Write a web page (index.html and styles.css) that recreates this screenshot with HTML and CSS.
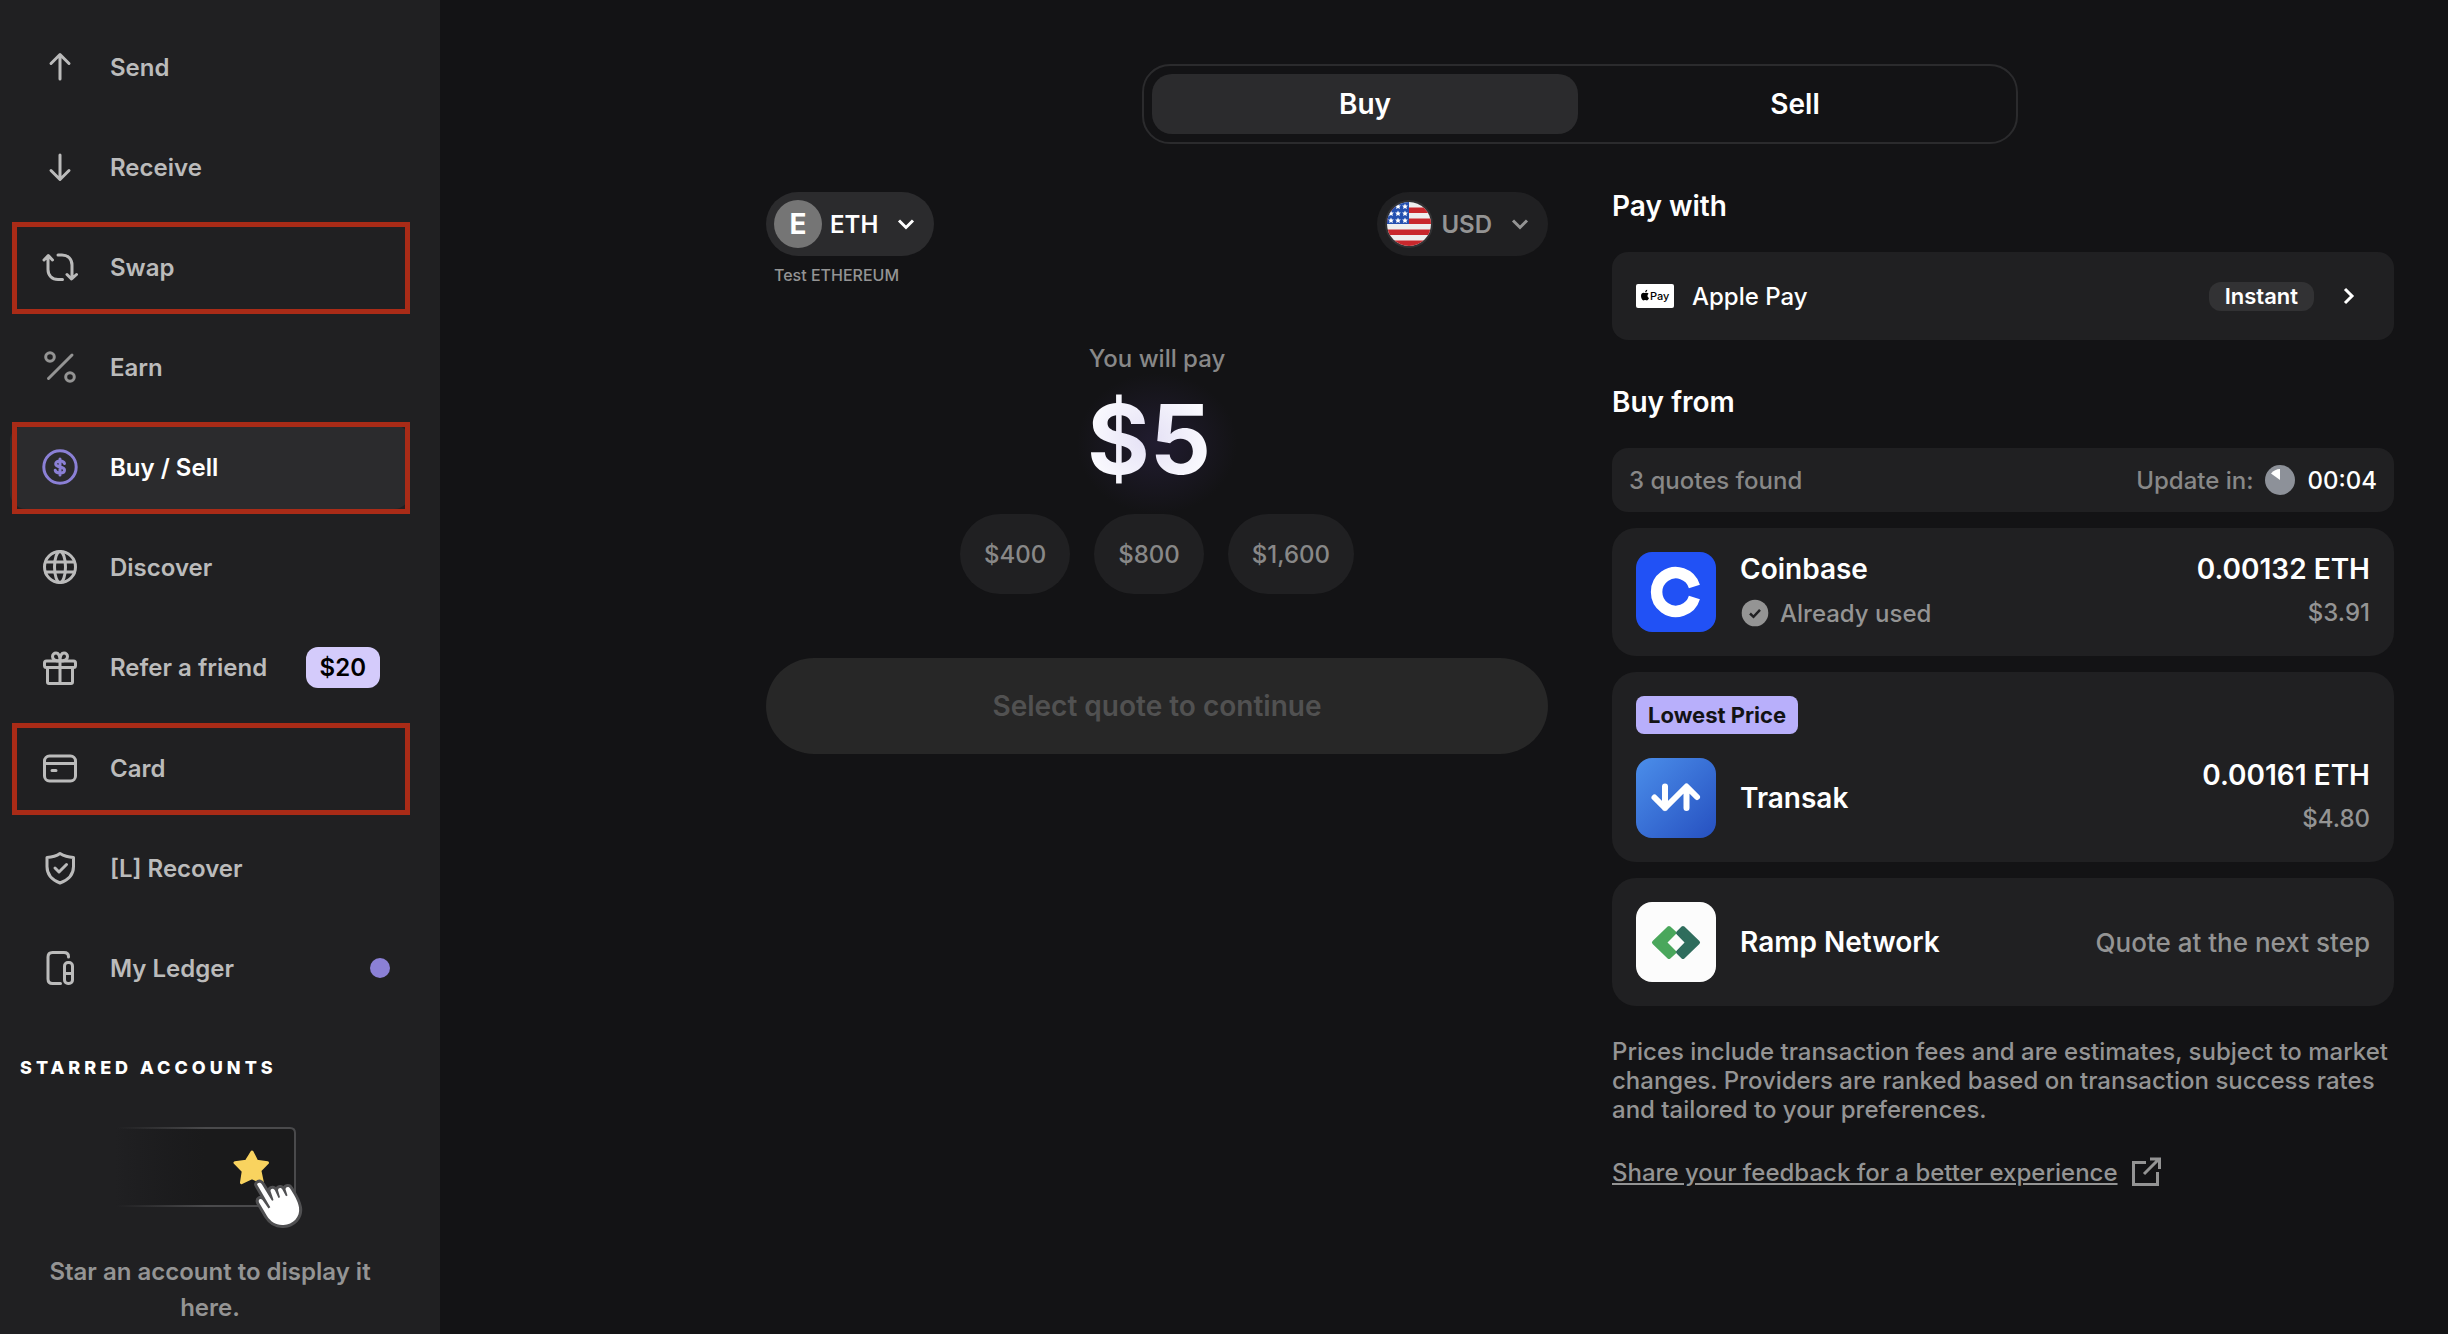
FILE: index.html
```html
<!DOCTYPE html>
<html lang="en">

<head>
  <meta charset="utf-8">
  <title>Buy / Sell</title>
  <link rel="stylesheet" href="styles.css">
</head>

<body>
  <aside class="sidebar">
    <nav class="menu">
      <a href="#" class="menu-item">
        <svg class="icon" viewBox="0 0 40 40"><path d="M20 32V8M11 16.500l9-9 9 9"/></svg>
        <span>Send</span>
      </a>
      <a href="#" class="menu-item">
        <svg class="icon" viewBox="0 0 40 40"><path d="M20 8v24M11 23.500l9 9 9-9"/></svg>
        <span>Receive</span>
      </a>
      <a href="#" class="menu-item marked">
        <svg class="icon" viewBox="0 0 40 40"><path d="M22.500 32.500H18c-6 0-10-4-10-10V9M4 13l4.300-4.500L12.500 13M18 8h4c6 0 10 4 10 10v13.500M27 27.500l4.500 4.500 5-4.500"/></svg>
        <span>Swap</span>
      </a>
      <a href="#" class="menu-item">
        <svg class="icon dim" viewBox="0 0 40 40"><circle cx="10" cy="10" r="4.300"/><circle cx="30" cy="30" r="4.300"/><path d="M32 8L8.500 31.500"/></svg>
        <span>Earn</span>
      </a>
      <a href="#" class="menu-item active marked">
        <svg class="icon" viewBox="0 0 40 40"><circle cx="20" cy="20" r="16.200"/><path d="M24.500 16.500c-.5-1.700-2-2.500-4.500-2.500s-4.300 1-4.300 3c0 4 8.800 2 8.800 6 0 2-1.900 3-4.500 3s-4.500-.9-4.800-2.700M20 12v16"/></svg>
        <span>Buy / Sell</span>
      </a>
      <a href="#" class="menu-item">
        <svg class="icon" viewBox="0 0 40 40"><circle cx="20" cy="20" r="15.500"/><ellipse cx="20" cy="20" rx="5.500" ry="15.500"/><path d="M5.500 15h29M5.500 25h29"/></svg>
        <span>Discover</span>
      </a>
      <a href="#" class="menu-item">
        <svg class="icon" viewBox="0 0 40 40"><rect x="4.500" y="13" width="31" height="6.500" rx="2"/><path d="M7.500 20v14c0 1 .7 1.500 1.500 1.500h22c.8 0 1.500-.5 1.500-1.500V20M20 13v22M20 13c-4.500 0-7.500-1-7.500-4.500 0-2 1.500-3.500 3.500-3.500 3 0 4 3.500 4 8zM20 13c4.500 0 7.500-1 7.500-4.500 0-2-1.500-3.500-3.500-3.500-3 0-4 3.500-4 8z"/></svg>
        <span>Refer a friend</span>
        <span class="reward">$20</span>
      </a>
      <a href="#" class="menu-item marked">
        <svg class="icon" viewBox="0 0 40 40"><rect x="4.500" y="8" width="31" height="25" rx="5"/><path d="M5 15.500h30M12 22.500h4"/></svg>
        <span>Card</span>
      </a>
      <a href="#" class="menu-item">
        <svg class="icon" viewBox="0 0 40 40"><path d="M20 5.500c4 2.500 8.500 3.700 13.500 4v9c0 8.500-5 13.500-13.500 16.500C12 32 7 27 7 18.500v-9c5-.3 9.500-1.500 13-4zM15 20l4 4 7.500-7.500"/></svg>
        <span>[L] Recover</span>
      </a>
      <a href="#" class="menu-item">
        <svg class="icon" viewBox="0 0 40 40"><path d="M20.500 35.500h-8c-3 0-4.500-1.500-4.500-4.500V9c0-3 1.500-4.500 4.500-4.500H24c3 0 4.500 1.500 4.500 4v.5"/><rect x="24.500" y="14.500" width="8" height="21" rx="3.500"/><path d="M25 25.500h7"/></svg>
        <span>My Ledger</span>
        <span class="dot"></span>
      </a>
    </nav>

    <h2 class="starred-title">STARRED ACCOUNTS</h2>
    <div class="starred">
      <svg width="190" height="104" viewBox="0 0 190 104">
        <defs>
          <linearGradient id="edge" x1="0" x2="1"><stop offset="0" stop-color="#4a4a4c" stop-opacity="0"/><stop offset=".5" stop-color="#4a4a4c"/></linearGradient>
          <linearGradient id="panel" x1="0" x2="1"><stop offset="0" stop-color="#18181a" stop-opacity="0"/><stop offset=".5" stop-color="#1a1a1b"/></linearGradient>
        </defs>
        <path d="M0 2h175q5 0 5 5v68q0 5-5 5H0z" fill="url(#panel)"/>
        <path d="M2 2h173q5 0 5 5v68q0 4.900-5 5H2" fill="none" stroke="url(#edge)" stroke-width="2"/>
        <path d="M137 26l4.700 9.200 10.800 1.600-7.600 7.700 2.500 12-10.400-4.800-10.500 4.900 1.800-11.500-8.300-8.300 11.300-1.600z" fill="#f9d35f" stroke="#f9d35f" stroke-width="3" stroke-linejoin="round"/>
        <path d="M142.500 57.500c1.500-1.500 3.500-1 4.500 1l9.500 15.500c.8 1.200 2.300.6 1.800-.8l-2.800-8.200c0-3 3.300-3 4.500-.5l3.500 7.500 1.500-.7-2-7c.3-3 3.500-3 4.500-.5l3.500 6.500 1.500-.7-2-6.300c.3-2.700 3.500-3 4.800-.5 3.700 6 7.700 12 8.700 18.700 1.500 9.500-6 17-15.500 17.500-7.500.5-13-3.500-16.500-9l-8-13.500c-1.300-3.500 1.700-4.500 3.500-2.500l6 8.500 1.800-1.300-12.800-22c-.5-.7-.5-1.200 0-1.700z" fill="#fff" stroke="#505052" stroke-width="6" paint-order="stroke" stroke-linejoin="round"/>
      </svg>
      <p>Star an account to display it here.</p>
    </div>
  </aside>

  <main class="main">
    <div class="tabs">
      <button class="tab selected">Buy</button>
      <button class="tab">Sell</button>
    </div>

    <div class="columns">
      <section class="order">
        <div class="currencies">
          <div>
            <button class="currency">
              <span class="coin">E</span>
              <span>ETH</span>
              <svg class="chevron" width="20" height="20" viewBox="0 0 20 20"><path d="M3 6.500l7 7 7-7"/></svg>
            </button>
            <p class="account">Test ETHEREUM</p>
          </div>
          <button class="currency fiat">
            <svg width="48" height="48" viewBox="0 0 48 48">
              <clipPath id="round"><circle cx="24" cy="24" r="22"/></clipPath>
              <circle cx="24" cy="24" r="24" fill="#323234"/>
              <g clip-path="url(#round)">
                <path fill="#eee" d="M0 0h48v48H0z"/>
                <path fill="#c9282d" d="M0 7.500h48V13H0zM0 18.500h48V24H0zM0 29.500h48V35H0zM0 40.500h48V48H0z"/>
                <path fill="#2450b0" d="M0 0h24v24H0z"/>
                <g fill="#fff">
                  <path id="s" d="M20 3.500l.9 1.900 2 .2-1.500 1.400.5 2-1.900-1-1.900 1 .5-2-1.500-1.400 2-.2z"/>
                  <use href="#s" x="-7"/><use href="#s" x="-14"/>
                  <use href="#s" y="7"/><use href="#s" x="-7" y="7"/><use href="#s" x="-14" y="7"/>
                  <use href="#s" y="14"/><use href="#s" x="-7" y="14"/><use href="#s" x="-14" y="14"/>
                </g>
              </g>
            </svg>
            <span>USD</span>
            <svg class="chevron" width="20" height="20" viewBox="0 0 20 20"><path d="M3 6.500l7 7 7-7"/></svg>
          </button>
        </div>

        <p class="pay-label">You will pay</p>
        <div class="amount"><span>$5</span></div>
        <div class="presets">
          <button>$400</button>
          <button>$800</button>
          <button>$1,600</button>
        </div>
        <button class="continue" disabled>Select quote to continue</button>
      </section>

      <section class="quotes">
        <h2>Pay with</h2>
        <button class="method">
          <svg width="38" height="24" viewBox="0 0 38 24">
            <rect width="38" height="24" rx="2" fill="#fff"/>
            <path d="M10.500 8.700c.8 0 1.600.3 2.100 1-1.700 1-1.400 3.600.4 4.200-.6 1.500-1.400 2.500-2.200 2.500-.7 0-.9-.4-1.700-.4s-1 .4-1.700.4C6.300 16.400 5 14 5 12c0-2.200 1.300-3.300 2.600-3.300.8 0 1.200.4 1.700.4.400 0 .8-.4 1.200-.4zM9.200 8.400c-.1-1.400.9-2.500 2-2.600.2 1.300-.9 2.500-2 2.600z"/>
            <text x="14" y="16" class="pay-text">Pay</text>
          </svg>
          <span class="method-name">Apple Pay</span>
          <span class="instant">Instant</span>
          <svg class="chevron" width="20" height="20" viewBox="0 0 20 20"><path d="M7 3l7 7-7 7"/></svg>
        </button>

        <h2>Buy from</h2>
        <div class="list">
          <div class="status">
            <span>3 quotes found</span>
            <span class="update">Update in:
              <svg width="30" height="30" viewBox="0 0 30 30"><circle cx="15" cy="15" r="15" fill="#8d9199"/><path d="M15 15V4c-3.500 0-6.500 1.500-9 4.500z" fill="#fff"/></svg>
              <b>00:04</b>
            </span>
          </div>

          <button class="quote">
            <svg class="logo" viewBox="0 0 80 80"><rect width="80" height="80" rx="16" fill="#2151f5"/><path d="M58.400 34.500A19.300 19.300 0 1 0 58.400 45.500" fill="none" stroke="#fff" stroke-width="11.500"/></svg>
            <span class="provider stacked">
              <span class="name">Coinbase</span>
              <span class="used">
                <svg width="30" height="30" viewBox="0 0 30 30"><circle cx="15" cy="15" r="13.300" fill="#949494"/><path d="M10 15.500l3.500 3.300 6.500-7" fill="none" stroke="#202022" stroke-width="2.500"/></svg>
                Already used
              </span>
            </span>
            <span class="price stacked">
              <span class="name">0.00132 ETH</span>
              <span>$3.91</span>
            </span>
          </button>

          <button class="quote">
            <span class="badge-row"><span class="badge">Lowest Price</span></span>
            <svg class="logo" viewBox="0 0 80 80">
              <linearGradient id="blue" x1="0" y1="0" x2="1" y2="1"><stop offset="0" stop-color="#4b8eea"/><stop offset="1" stop-color="#2650c0"/></linearGradient>
              <rect width="80" height="80" rx="16" fill="url(#blue)"/>
              <path d="M29 28.500V50M18.500 39.500L29 50l21.500-21.500L61 39M50.500 29v21" fill="none" stroke="#fff" stroke-width="6" stroke-linecap="round" stroke-linejoin="round"/>
            </svg>
            <span class="provider"><span class="name">Transak</span></span>
            <span class="price stacked">
              <span class="name">0.00161 ETH</span>
              <span>$4.80</span>
            </span>
          </button>

          <button class="quote">
            <svg class="logo" viewBox="0 0 80 80">
              <rect width="80" height="80" rx="16" fill="#fcfcfc"/>
              <g stroke-width="4" stroke-linejoin="round">
                <path d="M33 26l5.500 5-9 9.500 9 9.500-5.500 5-15-14.500z" fill="#4aa75c" stroke="#4aa75c"/>
                <path d="M47 26l-5 5 9 9.500-9 9.500 5 5 15-14.500z" fill="#2f6d5d" stroke="#2f6d5d"/>
              </g>
              <path d="M40 32l8.500 8.500L40 49l-8.500-8.500z" fill="#fcfcfc"/>
            </svg>
            <span class="provider"><span class="name">Ramp Network</span></span>
            <span class="price next-step">Quote at the next step</span>
          </button>
        </div>

        <p class="note">Prices include transaction fees and are estimates, subject to market changes. Providers are ranked based on transaction success rates and tailored to your preferences.</p>
        <a href="#" class="feedback">
          <span>Share your feedback for a better experience</span>
          <svg width="32" height="32" viewBox="0 0 32 32"><path d="M16 6.500H3.500v22h24V16M14 18L29 3M20 3h9.500v10"/></svg>
        </a>
      </section>
    </div>
  </main>
</body>

</html>
```
FILE: styles.css
```css
* {
  box-sizing: border-box;
}

body {
  display: flex;
  min-height: 100vh;
  margin: 0;
  background-color: #131315;
  color: #fff;
  font-family: Inter, sans-serif;
  font-size: 24px;
  font-weight: 500;
  line-height: 29px;
}

h2,
p {
  margin: 0;
}

button {
  border: none;
  color: inherit;
  font: inherit;
  cursor: pointer;
}

svg {
  flex: none;
}

/* Sidebar */
.sidebar {
  flex: none;
  width: 440px;
  padding: 25px 30px 0 10px;
  background-color: #202022;
  font-weight: 600;
}

.menu {
  display: flex;
  flex-direction: column;
  gap: 16px;
}

.menu-item {
  position: relative;
  display: flex;
  align-items: center;
  min-height: 84px;
  padding: 22px 20px 22px 30px;
  border-radius: 16px;
  color: #bbb;
  text-decoration: none;
}

.menu-item .icon {
  width: 40px;
  height: 40px;
  margin-right: 30px;
}

.icon {
  fill: none;
  stroke: #bbb;
  stroke-width: 3;
  stroke-linecap: round;
  stroke-linejoin: round;
}

.icon.dim {
  stroke: #949494;
}

.menu-item.active {
  background-color: #2b2b2d;
  color: #fff;
}

.active .icon {
  stroke: #8b80d6;
}

.menu-item.marked::after {
  content: '';
  position: absolute;
  inset: -3px 0 -5px 2px;
  border: 5px solid #a92b17;
}

.reward {
  margin: 0 10px 0 auto;
  padding: 6px 14px;
  border-radius: 12px;
  background-color: #d4cbfb;
  color: #000;
}

.dot {
  width: 20px;
  height: 20px;
  margin-left: auto;
  border-radius: 50%;
  background-color: #8b80d6;
}

.starred-title {
  margin-top: 43px;
  padding-left: 10px;
  font-size: 18px;
  font-weight: 800;
  letter-spacing: 4px;
}

.starred {
  display: flex;
  flex-direction: column;
  align-items: center;
  gap: 24px;
  padding: 44px 20px 0;
  color: #949494;
  line-height: 36px;
  text-align: center;
}

/* Content */
.main {
  flex: 1;
  padding: 64px 54px 64px 326px;
}

.tabs {
  display: flex;
  gap: 4px;
  max-width: 876px;
  margin: 0 auto 48px;
  padding: 8px;
  border: 2px solid #2b2b2d;
  border-radius: 28px;
}

.tab {
  flex: 1;
  height: 60px;
  border-radius: 20px;
  background: none;
  font-size: 28px;
  font-weight: 600;
}

.tab.selected {
  background-color: #2b2b2d;
}

.columns {
  display: grid;
  grid-template-columns: 1fr 1fr;
  gap: 64px;
}

.currencies {
  display: flex;
  justify-content: space-between;
  align-items: flex-start;
}

.currency {
  display: flex;
  align-items: center;
  gap: 8px;
  padding: 8px 18px 8px 8px;
  border-radius: 32px;
  background-color: #2b2b2d;
  font-weight: 600;
}

.currency.fiat {
  background-color: #202022;
  color: #949494;
}

.currency .chevron {
  margin-left: 10px;
}

.coin {
  width: 48px;
  border-radius: 50%;
  background-color: #757575;
  font-size: 28px;
  font-weight: 700;
  line-height: 48px;
}

.chevron {
  fill: none;
  stroke: currentColor;
  stroke-width: 3;
}

.account {
  padding: 5px 8px 0;
  color: #949494;
  font-size: 16px;
}

.pay-label {
  margin-top: 54px;
  color: #888;
  text-align: center;
}

.amount {
  width: 160px;
  margin: 0 auto;
  padding: 0 16px 8px 0;
  background: radial-gradient(closest-side, #211c30, #131315);
  font-size: 96px;
  font-weight: 700;
  line-height: 133px;
  text-align: center;
}

.amount span {
  background: radial-gradient(closest-side, #e4e0f5, #fafafe);
  background-clip: text;
  color: transparent;
}

.presets {
  display: flex;
  justify-content: center;
  gap: 24px;
}

.presets button {
  height: 80px;
  padding: 0 24px;
  border-radius: 40px;
  background-color: #202022;
  color: #888;
}

.continue {
  width: 100%;
  height: 96px;
  margin-top: 64px;
  border-radius: 48px;
  background-color: #272727;
  color: #515151;
  font-size: 28px;
  font-weight: 600;
}

/* Quotes */
.quotes h2 {
  margin-bottom: 31px;
  font-size: 28px;
  font-weight: 600;
}

.method {
  display: flex;
  align-items: center;
  width: 100%;
  height: 88px;
  margin-bottom: 48px;
  padding: 0 36px 0 24px;
  border-radius: 16px;
  background-color: #202022;
}

.method-name {
  margin: 0 auto 0 18px;
}

.pay-text {
  font-size: 11px;
}

.instant {
  margin-right: 24px;
  padding: 0 16px;
  border-radius: 12px;
  background-color: #323234;
  font-size: 22px;
  font-weight: 600;
}

.list {
  display: flex;
  flex-direction: column;
  gap: 16px;
}

.status {
  display: flex;
  justify-content: space-between;
  align-items: center;
  height: 64px;
  padding: 0 17px;
  border-radius: 16px;
  background-color: #202022;
  color: #888;
}

.update {
  display: flex;
  align-items: center;
  gap: 12px;
}

.update b {
  color: #fff;
  font-weight: 500;
}

.quote {
  display: flex;
  flex-wrap: wrap;
  align-items: center;
  gap: 24px;
  padding: 24px;
  border-radius: 24px;
  background-color: #202022;
  color: #949494;
  text-align: left;
}

.badge-row {
  display: flex;
  width: 100%;
}

.badge {
  padding: 0 12px;
  border-radius: 8px;
  background-color: #b8affb;
  color: #131315;
  font-size: 22px;
  font-weight: 700;
  line-height: 38px;
}

.logo {
  width: 80px;
  height: 80px;
}

.provider,
.price {
  display: flex;
  flex-direction: column;
  gap: 12px;
}

.stacked {
  align-self: flex-start;
}

.price {
  margin-left: auto;
  align-items: flex-end;
}

.next-step {
  font-size: 26px;
}

.name {
  color: #fff;
  font-size: 28px;
  font-weight: 600;
  line-height: 34px;
}

.used {
  display: flex;
  align-items: center;
  gap: 10px;
}

.note {
  margin: 31px 0 32px;
  color: #949494;
}

.feedback {
  display: flex;
  align-items: center;
  gap: 12px;
  color: #949494;
}

.feedback svg {
  fill: none;
  stroke: currentColor;
  stroke-width: 3;
}
```
